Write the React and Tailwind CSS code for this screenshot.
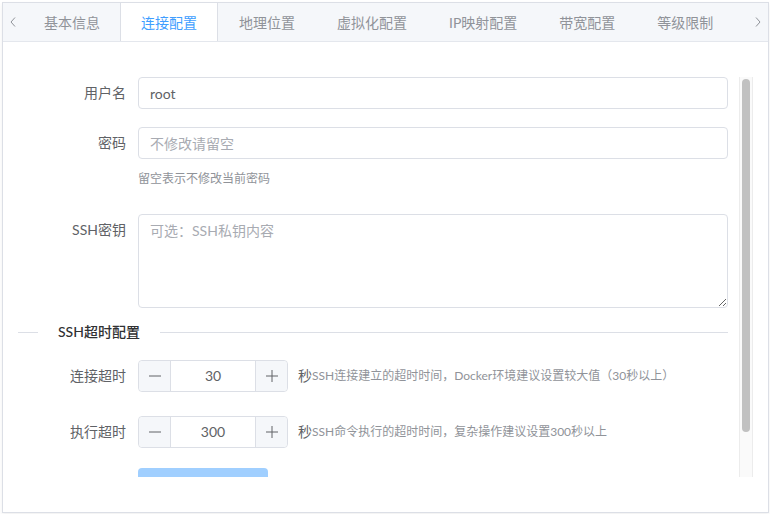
import React, { useState } from "react";

const tabs = ["基本信息", "连接配置", "地理位置", "虚拟化配置", "IP映射配置", "带宽配置", "等级限制"];

const Arrow = ({ dir }) => (
  <svg width="10" height="12" viewBox="0 0 10 12" fill="none">
    {dir === "left" ? (
      <polyline points="7,1.5 3,6 7,10.5" stroke="#909399" strokeWidth="1" />
    ) : (
      <polyline points="3,1.5 7,6 3,10.5" stroke="#909399" strokeWidth="1" />
    )}
  </svg>
);

const Label = ({ children }) => (
  <div className="w-[120px] shrink-0 pr-[12px] text-right text-sm leading-[32px] text-[#606266]">
    {children}
  </div>
);

const NumberInput = ({ value }) => (
  <div className="flex h-[32px] w-[150px] shrink-0 rounded-[4px] border border-[#dcdfe6] bg-white">
    <button className="flex w-[32px] items-center justify-center rounded-l-[4px] border-r border-[#dcdfe6] bg-[#f5f7fa]">
      <svg width="14" height="14" viewBox="0 0 14 14">
        <line x1="1" y1="7" x2="13" y2="7" stroke="#606266" strokeWidth="1" />
      </svg>
    </button>
    <div className="flex flex-1 items-center justify-center text-sm text-[#606266]">{value}</div>
    <button className="flex w-[32px] items-center justify-center rounded-r-[4px] border-l border-[#dcdfe6] bg-[#f5f7fa]">
      <svg width="14" height="14" viewBox="0 0 14 14">
        <line x1="1" y1="7" x2="13" y2="7" stroke="#606266" strokeWidth="1" />
        <line x1="7" y1="1" x2="7" y2="13" stroke="#606266" strokeWidth="1" />
      </svg>
    </button>
  </div>
);

export default function App() {
  const [username, setUsername] = useState("root");

  return (
    <div className="h-[514px] w-[770px] bg-white pl-[2px] pt-[2px] font-[Lato,'Noto_Sans_CJK_SC',sans-serif]">
      <div className="flex h-[511px] w-[767px] flex-col border border-[#dcdfe6] bg-white shadow-[0_2px_4px_rgba(0,0,0,0.06)]">
        {/* tabs header */}
        <div className="flex h-[39px] shrink-0 border-b border-[#e4e7ed] bg-[#f5f7fa]">
          <div className="flex w-[20px] items-center justify-center">
            <Arrow dir="left" />
          </div>
          <div className="flex flex-1 overflow-hidden">
            {tabs.map((t, i) =>
              i === 1 ? (
                <div
                  key={t}
                  className="-mb-px -ml-px flex h-[40px] shrink-0 items-center border-x border-[#dcdfe6] bg-white px-[20px] text-sm text-[#409eff]"
                >
                  {t}
                </div>
              ) : (
                <div
                  key={t}
                  className="flex h-[39px] shrink-0 items-center border-x border-transparent px-[20px] text-sm text-[#909399]"
                >
                  {t}
                </div>
              )
            )}
          </div>
          <div className="flex w-[20px] items-center justify-center">
            <Arrow dir="right" />
          </div>
        </div>

        {/* body */}
        <div className="flex flex-1 px-[15px] pb-[35px] pt-[35px]">
          <div className="flex h-[400px] flex-1">
            <div className="flex-1 overflow-hidden pr-[11px]">
              <div className="mb-[18px] flex">
                <Label>用户名</Label>
                <input
                  value={username}
                  onChange={(e) => setUsername(e.target.value)}
                  className="h-[32px] flex-1 rounded-[4px] border border-[#dcdfe6] px-[11px] text-sm text-[#606266] outline-none"
                />
              </div>

              <div className="mb-[25px] flex">
                <Label>密码</Label>
                <div className="flex-1">
                  <input
                    type="password"
                    placeholder="不修改请留空"
                    className="h-[32px] w-full rounded-[4px] border border-[#dcdfe6] px-[11px] text-sm text-[#606266] outline-none placeholder:text-[#a8abb2]"
                  />
                  <div className="mt-[10px] text-xs leading-5 text-[#909399]">留空表示不修改当前密码</div>
                </div>
              </div>

              <div className="flex">
                <Label>SSH密钥</Label>
                <textarea
                  placeholder="可选：SSH私钥内容"
                  className="h-[94px] flex-1 resize-y rounded-[4px] border border-[#dcdfe6] px-[11px] py-[5px] text-sm leading-[21px] text-[#606266] outline-none placeholder:text-[#a8abb2]"
                />
              </div>

              {/* divider */}
              <div className="mb-[21px] mt-[17px] flex items-center">
                <div className="h-px w-[20px] bg-[#dcdfe6]" />
                <span className="px-[20px] text-sm font-medium leading-[14px] text-[#303133]">SSH超时配置</span>
                <div className="h-px flex-1 bg-[#dcdfe6]" />
              </div>

              <div className="mb-[24px] flex">
                <Label>连接超时</Label>
                <NumberInput value="30" />
                <div className="ml-[10px] flex items-center whitespace-nowrap">
                  <span className="text-sm text-[#606266]">秒</span>
                  <span className="text-xs text-[#909399]">SSH连接建立的超时时间，Docker环境建议设置较大值（30秒以上）</span>
                </div>
              </div>

              <div className="mb-[20px] flex">
                <Label>执行超时</Label>
                <NumberInput value="300" />
                <div className="ml-[10px] flex items-center whitespace-nowrap">
                  <span className="text-sm text-[#606266]">秒</span>
                  <span className="text-xs text-[#909399]">SSH命令执行的超时时间，复杂操作建议设置300秒以上</span>
                </div>
              </div>

              <div className="flex">
                <Label>连接测试</Label>
                <button className="h-[32px] w-[130px] rounded-[4px] bg-[#a0cfff] text-sm text-white">测试连接</button>
              </div>
            </div>

            {/* scrollbar */}
            <div className="flex w-[14px] shrink-0 flex-col items-center border-x border-[#ececec] bg-[#fafafa] pt-[2px]">
              <div className="h-[353px] w-[8px] rounded-full bg-[#c1c1c1]" />
            </div>
          </div>
        </div>
      </div>
    </div>
  );
}
